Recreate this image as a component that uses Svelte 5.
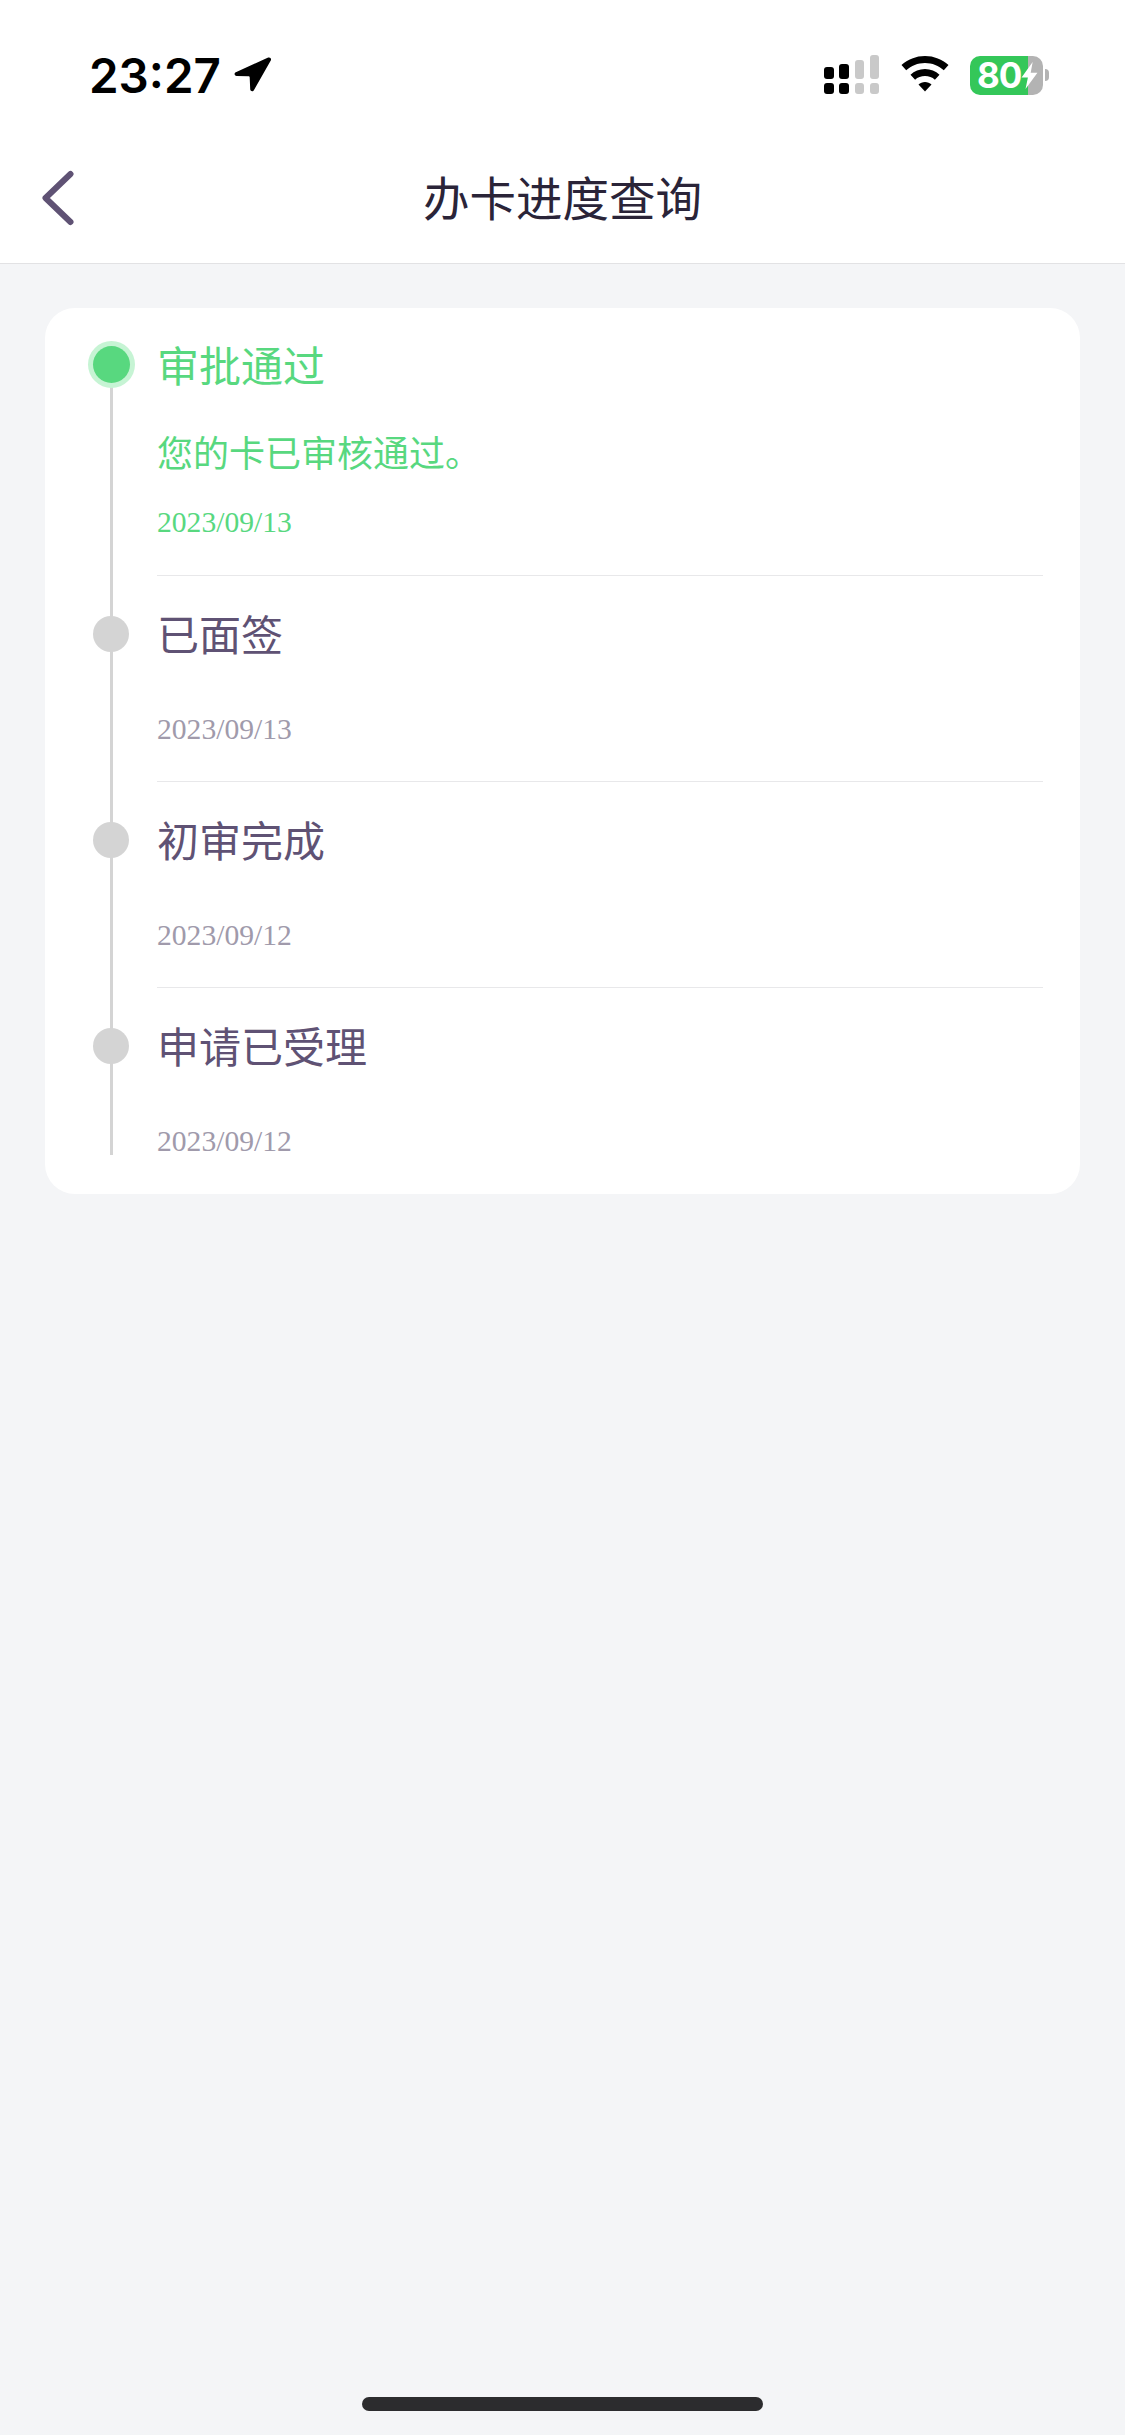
<script>
  const steps = [
    { title: '审批通过', note: '您的卡已审核通过。', date: '2023/09/13', active: true },
    { title: '已面签', date: '2023/09/13' },
    { title: '初审完成', date: '2023/09/12' },
    { title: '申请已受理', date: '2023/09/12' }
  ];
</script>

<div class="page">
  <header class="head">
    <div class="status">
      <div class="clock">
        <span class="time">23:27</span>
        <svg class="arrow" width="40" height="40" viewBox="0 0 40 40">
          <path d="M36.2 2.6 3.8 17.2c-2 .9-1.400 3.800.8 3.800l11.800.3c.8 0 1.300.5 1.300 1.300l.5 11.600c.1 2.200 3 2.700 3.800.7L38.900 5.200c.7-1.700-1-3.300-2.700-2.600Z" fill="#000" />
        </svg>
      </div>
      <div class="indicators">
        <svg width="56" height="40" viewBox="0 0 56 40">
          <rect x="0" y="12" width="10" height="12" rx="3" fill="#000" />
          <rect x="15" y="9" width="10" height="15" rx="3" fill="#000" />
          <rect x="31" y="5" width="9" height="19" rx="3" fill="#c9c9c9" />
          <rect x="46" y="0" width="9" height="24" rx="3" fill="#c9c9c9" />
          <rect x="0" y="28" width="10" height="11" rx="3" fill="#000" />
          <rect x="15" y="28" width="10" height="11" rx="3" fill="#000" />
          <rect x="31" y="28" width="9" height="11" rx="3" fill="#c9c9c9" />
          <rect x="46" y="28" width="9" height="11" rx="3" fill="#c9c9c9" />
        </svg>
        <svg class="wifi" width="48" height="36" viewBox="0 0 48 36">
          <path d="M24 0c9 0 17.300 3.400 23.500 9.100l-4.700 5.200C37.800 9.800 31.200 7 24 7S10.200 9.800 5.200 14.300L.5 9.100C6.700 3.400 15 0 24 0Z" fill="#000" />
          <path d="M24 13c5.600 0 10.700 2.100 14.500 5.700l-4.600 5C31.300 21.300 27.800 20 24 20s-7.300 1.300-9.900 3.700l-4.600-5C13.300 15.100 18.400 13 24 13Z" fill="#000" />
          <path d="M24 26c2.500 0 4.800.9 6.500 2.500L24 35.500l-6.500-7C19.200 26.900 21.500 26 24 26Z" fill="#000" />
        </svg>
        <div class="battery">
          <div class="cell">
            <span class="level">80</span>
            <svg class="bolt" width="17" height="27" viewBox="0 0 20 34">
              <path d="M14 0 0 19.500h8L5 34 20 13.500h-8.500Z" fill="#fff" />
            </svg>
          </div>
          <span class="nub"></span>
        </div>
      </div>
    </div>
    <nav class="nav">
      <button class="back" aria-label="返回">
        <svg width="34" height="56" viewBox="0 0 34 56">
          <path d="M29.500 4 4.500 28l25 24" fill="none" stroke="#5f5274" stroke-width="6" stroke-linecap="round" stroke-linejoin="round" />
        </svg>
      </button>
      <h1>办卡进度查询</h1>
    </nav>
  </header>

  <main class="content">
    <section class="card">
      {#each steps as step}
        <div class="step" class:active={step.active}>
          <span class="dot"></span>
          <div class="title">{step.title}</div>
          {#if step.note}
            <div class="note">{step.note}</div>
          {/if}
          <div class="date" class:spaced={!step.note}>{step.date}</div>
        </div>
      {/each}
    </section>
  </main>

  <div class="home-bar"></div>
</div>

<style>
  :global(body) {
    margin: 0;
    background: #f4f5f7;
  }

  .page {
    display: flex;
    flex-direction: column;
    height: 2435px;
    background: #f4f5f7;
    font-family: "Noto Sans CJK SC", "Noto Sans", sans-serif;
  }

  .head {
    background: #fff;
    border-bottom: 1px solid #e2e2e4;
  }

  .status {
    display: flex;
    justify-content: space-between;
    align-items: flex-start;
    height: 140px;
    box-sizing: border-box;
    padding: 47px 76px 0 89px;
  }

  .clock {
    display: flex;
    align-items: center;
    gap: 11px;
  }

  .time {
    font-family: Inter, sans-serif;
    font-size: 47.500px;
    font-weight: 600;
    line-height: 58px;
    color: #000;
  }

  .arrow {
    margin-bottom: 3px;
  }

  .indicators {
    display: flex;
    align-items: center;
    gap: 21px;
    margin-top: 8px;
  }

  .wifi {
    margin-bottom: 2px;
  }

  .battery {
    display: flex;
    align-items: center;
    gap: 2px;
  }

  .cell {
    display: flex;
    align-items: center;
    width: 73px;
    height: 39px;
    box-sizing: border-box;
    padding-left: 7px;
    border-radius: 10px;
    background: linear-gradient(90deg, #34c759 0 80%, #b3b3b3 80% 100%);
  }

  .level {
    font-family: Inter, sans-serif;
    font-size: 35px;
    font-weight: 700;
    line-height: 39px;
    letter-spacing: -1px;
    color: #fff;
  }

  .bolt {
    flex: none;
  }

  .nub {
    width: 4px;
    height: 12px;
    border-radius: 0 6px 6px 0;
    background: #b3b3b3;
  }

  .nav {
    position: relative;
    display: flex;
    align-items: center;
    justify-content: center;
    height: 123px;
    box-sizing: border-box;
    padding-bottom: 12px;
  }

  .back {
    position: absolute;
    left: 41px;
    top: 30px;
    padding: 0;
    border: 0;
    background: none;
    line-height: 0;
  }

  h1 {
    margin: 0;
    font-size: 46.500px;
    font-weight: 400;
    line-height: 60px;
    color: #2a2438;
  }

  .content {
    flex: 1;
    padding: 44px 45px 0;
  }

  .card {
    padding: 0 37px 0 112px;
    border-radius: 30px;
    background: #fff;
  }

  .step {
    position: relative;
    padding: 30px 0 32px;
    color: #5f5274;
    border-bottom: 1px solid #e8e8ea;
  }

  .step:last-child {
    padding-bottom: 33px;
    border-bottom: 0;
  }

  .step::before {
    content: "";
    position: absolute;
    left: -47px;
    top: 0;
    bottom: -1px;
    width: 3px;
    background: #d4d4d4;
  }

  .step:first-child::before {
    top: 57px;
  }

  .step:last-child::before {
    bottom: 39px;
  }

  .dot {
    position: absolute;
    left: -64px;
    top: 40px;
    width: 36px;
    height: 36px;
    border-radius: 50%;
    background: #d4d4d4;
  }

  .title {
    font-size: 42px;
    line-height: 54px;
  }

  .note {
    margin-top: 35px;
    font-size: 36px;
    line-height: 50px;
  }

  .date {
    margin-top: 26px;
    font-family: "Liberation Serif", serif;
    font-size: 29.600px;
    line-height: 40px;
    color: #a09aab;
  }

  .date.spaced {
    margin-top: 49px;
  }

  .active {
    color: #58d87f;
    padding-top: 29px;
    padding-bottom: 33px;
  }

  .active .date {
    color: #58d87f;
  }

  .active .dot {
    left: -64.500px;
    top: 37.500px;
    width: 37px;
    height: 37px;
    background: #58d87f;
    box-shadow: 0 0 0 5px #c6f4d4;
  }

  .home-bar {
    align-self: center;
    width: 401px;
    height: 14px;
    margin-bottom: 24px;
    border-radius: 7px;
    background: #2c2c2e;
  }
</style>
